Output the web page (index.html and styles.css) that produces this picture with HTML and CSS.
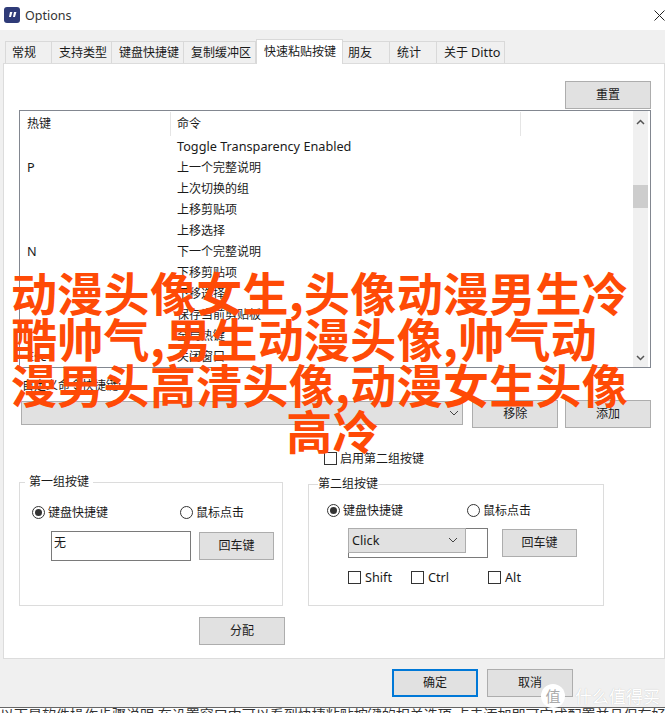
FILE: index.html
```html
<!DOCTYPE html>
<html>
<head>
  <title>Options</title>
  <link rel="stylesheet" href="styles.css">
</head>
<body>
  <div class="titlebar">
    <svg class="app-icon" width="16" height="16" viewBox="0 0 16 16">
      <rect width="16" height="16" rx="3" fill="#2f3b78"/>
      <path d="M6 5h2.400l-1.400 5h-2zM10 5h2.400l-1.400 5h-2z" fill="#fff"/>
    </svg>
    <span class="title-text">Options</span>
    <svg class="close-icon" width="11" height="11" viewBox="0 0 11 11">
      <path d="M0.500 0.500l10 10M10.500 0.500l-10 10" stroke="#222" fill="none"/>
    </svg>
  </div>

  <div class="window">
    <div class="tabs">
      <div class="tab">常规</div>
      <div class="tab">支持类型</div>
      <div class="tab">键盘快捷键</div>
      <div class="tab">复制缓冲区</div>
      <div class="tab active">快速粘贴按键</div>
      <div class="tab">朋友</div>
      <div class="tab">统计</div>
      <div class="tab">关于 <span class="en">Ditto</span></div>
    </div>

    <div class="panel">
      <div class="toolbar">
        <button class="btn">重置</button>
      </div>

      <div class="list">
        <div class="list-main">
          <div class="list-head">
            <div class="col-key">热键</div>
            <div class="col-cmd">命令</div>
          </div>
          <div class="row"><div class="col-key"></div><div class="col-cmd en">Toggle Transparency Enabled</div></div>
          <div class="row"><div class="col-key en">P</div><div class="col-cmd">上一个完整说明</div></div>
          <div class="row"><div class="col-key"></div><div class="col-cmd">上次切换的组</div></div>
          <div class="row"><div class="col-key"></div><div class="col-cmd">上移剪贴项</div></div>
          <div class="row"><div class="col-key"></div><div class="col-cmd">上移选择</div></div>
          <div class="row"><div class="col-key en">N</div><div class="col-cmd">下一个完整说明</div></div>
          <div class="row"><div class="col-key"></div><div class="col-cmd">下移剪贴项</div></div>
          <div class="row"><div class="col-key"></div><div class="col-cmd">下移选择</div></div>
          <div class="row"><div class="col-key"></div><div class="col-cmd">保存当前剪贴板</div></div>
          <div class="row"><div class="col-key"></div><div class="col-cmd">全局热键</div></div>
          <div class="row"><div class="col-key en">Esc</div><div class="col-cmd">关闭窗口</div></div>
        </div>
        <div class="scrollbar">
          <svg class="scroll-arrow" width="9" height="6" viewBox="0 0 9 6"><path d="M1 5l3.500-3.500 3.500 3.500" stroke="#555" stroke-width="1.500" fill="none"/></svg>
          <div class="scroll-thumb"></div>
          <svg class="scroll-arrow" width="9" height="6" viewBox="0 0 9 6"><path d="M1 1l3.500 3.500 3.500-3.500" stroke="#555" stroke-width="1.500" fill="none"/></svg>
        </div>
      </div>

      <div class="cmd-label">自定义命令快捷键:</div>
      <div class="cmd-row">
        <div class="select cmd-select">
          <svg width="10" height="6" viewBox="0 0 10 6"><path d="M1 1l4 4 4-4" stroke="#444" fill="none"/></svg>
        </div>
        <button class="btn">移除</button>
        <button class="btn">添加</button>
      </div>

      <div class="enable-row">
        <span class="check"></span>
        <span>启用第二组按键</span>
      </div>

      <div class="groups">
        <div class="group group-one">
          <div class="legend">第一组按键</div>
          <div class="radios">
            <span class="radio on"></span><span class="radio-label radio-label-one">键盘快捷键</span>
            <span class="radio"></span><span class="radio-label">鼠标点击</span>
          </div>
          <div class="key-row">
            <div class="key-box">无</div>
            <button class="btn btn-small">回车键</button>
          </div>
        </div>

        <div class="group group-two">
          <div class="legend legend-two">第二组按键</div>
          <div class="radios">
            <span class="radio on"></span><span class="radio-label radio-label-two">键盘快捷键</span>
            <span class="radio"></span><span class="radio-label">鼠标点击</span>
          </div>
          <div class="key-row">
            <div class="key-box">
              <div class="select mouse-select">
                <span class="en">Click</span>
                <svg width="10" height="6" viewBox="0 0 10 6"><path d="M1 1l4 4 4-4" stroke="#444" fill="none"/></svg>
              </div>
            </div>
            <button class="btn btn-small">回车键</button>
          </div>
          <div class="mods">
            <span class="mod mod-shift"><span class="check"></span><span class="en">Shift</span></span>
            <span class="mod mod-ctrl"><span class="check"></span><span class="en">Ctrl</span></span>
            <span class="mod"><span class="check"></span><span class="en">Alt</span></span>
          </div>
        </div>
      </div>

      <div class="assign-row">
        <button class="btn">分配</button>
      </div>
    </div>

    <div class="footer">
      <button class="btn btn-default">确定</button>
      <button class="btn">取消</button>
    </div>
  </div>

  <div class="next-strip">以下是软件操作步骤说明,在设置窗口中可以看到快捷粘贴按键的相关选项,点击添加即可完成配置并且保存好这些内容以便下次继续</div>

  <h1 class="headline">
    <span class="line">动漫头像女生,头像动漫男生冷</span>
    <span class="line">酷帅气,男生动漫头像,帅气动</span>
    <span class="line">漫男头高清头像,动漫女生头像</span>
    <span class="line line-last">高冷</span>
  </h1>

  <div class="watermark">
    <span class="watermark-badge">值</span>
    <span class="watermark-text">什么值得买</span>
  </div>
</body>
</html>
```

FILE: styles.css
```css
* {
  box-sizing: border-box;
}
html, body {
  margin: 0;
  height: 100%;
}
body {
  position: relative;
  display: flex;
  flex-direction: column;
  width: 665px;
  height: 713px;
  overflow: hidden;
  font-family: "Noto Sans", "Noto Sans CJK SC", sans-serif;
  font-size: 12px;
  color: #1a1a1a;
  background: white;
}
.en {
  font-size: 12.7px;
}
.titlebar {
  display: flex;
  align-items: center;
  height: 30px;
  padding: 0 0 0 4px;
  background: white;
}
.title-text {
  margin-left: 5px;
  font-size: 12.5px;
  color: #333;
}
.close-icon {
  margin-left: auto;
  margin-right: 0;
}
.window {
  display: flex;
  flex-direction: column;
  height: 677px;
  background: #f0f0f0;
}

/* tabs */
.tabs {
  display: flex;
  align-items: flex-end;
  height: 33px;
  padding-left: 5px;
}
.tab {
  display: flex;
  align-items: center;
  gap: 3px;
  min-width: 47px;
  height: 22px;
  padding: 0 4px 2px 7px;
  background: #f0f0f0;
  border: 1px solid #d9d9d9;
  border-bottom: none;
  border-left: none;
  white-space: nowrap;
}
.tab:first-child {
  border-left: 1px solid #d9d9d9;
  padding-left: 6px;
}
.tab.active {
  position: relative;
  height: 25px;
  margin-bottom: -1px;
  padding: 0 6px 3px 7px;
  background: white;
  border-left: 1px solid #d9d9d9;
}
.tab.active + .tab {
  padding-left: 5px;
}
.panel {
  height: 596px;
  margin-left: 3px;
  padding: 17px 13px 0 15px;
  background: white;
  border: 1px solid #dcdcdc;
}

/* buttons */
.btn {
  width: 86px;
  height: 28px;
  padding: 0 0 2px;
  font: inherit;
  color: #1a1a1a;
  background: #e1e1e1;
  border: 1px solid #adadad;
}
.btn-small {
  width: 75px;
}
.btn-default {
  border: 2px solid #0078d7;
}
.toolbar {
  display: flex;
  justify-content: flex-end;
}

/* hotkey list */
.list {
  display: flex;
  height: 258px;
  margin-top: 1px;
  border: 1px solid #828790;
}
.list-main {
  flex: 1;
}
.list-head, .row {
  display: flex;
  align-items: center;
}
.list-head {
  height: 25px;
}
.row {
  height: 21px;
  padding-bottom: 2px;
}
.col-key {
  width: 151px;
  padding-left: 7px;
}
.col-cmd {
  width: 350px;
  padding-left: 6px;
}
.list-head .col-key, .list-head .col-cmd {
  height: 24px;
  line-height: 24px;
  border-right: 1px solid #e5e5e5;
}
.scrollbar {
  display: flex;
  flex-direction: column;
  align-items: center;
  justify-content: space-between;
  position: relative;
  width: 15px;
  margin-right: 2px;
  padding: 8px 0 6px;
  background: #f0f0f0;
}
.scroll-thumb {
  position: absolute;
  top: 74px;
  left: 0;
  width: 15px;
  height: 23px;
  background: #cdcdcd;
}

/* command row */
.cmd-label {
  height: 16px;
  margin-top: 10px;
  padding-left: 3px;
  line-height: 16px;
}
.select {
  display: flex;
  align-items: center;
  justify-content: space-between;
  background: #e1e1e1;
  border: 1px solid #adadad;
}
.cmd-row {
  display: flex;
  align-items: flex-start;
  gap: 7px;
  margin-top: 6px;
}
.cmd-select {
  justify-content: flex-end;
  width: 443px;
  height: 24px;
  margin: 1px 2px 0 2px;
  padding-right: 3px;
}
.enable-row {
  display: flex;
  align-items: center;
  gap: 3px;
  height: 15px;
  margin-top: 23px;
  padding-left: 305px;
}
.enable-row span:last-child {
  margin-top: -2px;
}
.check {
  display: inline-block;
  width: 13px;
  height: 13px;
  background: white;
  border: 1px solid #333;
}

/* key groups */
.groups {
  display: flex;
  align-items: flex-end;
  gap: 25px;
  margin-top: 16px;
}
.group {
  position: relative;
  border: 1px solid #dcdcdc;
}
.group-one {
  width: 264px;
  height: 124px;
  padding: 23px 0 0 12px;
}
.group-two {
  width: 296px;
  height: 122px;
  padding: 19px 0 0 18px;
}
.legend {
  position: absolute;
  top: -9px;
  left: 5px;
  padding: 0 4px;
  line-height: 16px;
  background: white;
}
.legend-two {
  padding: 0;
  left: 9px;
}
.radios {
  display: flex;
  align-items: center;
  height: 13px;
}
.radio {
  position: relative;
  width: 13px;
  height: 13px;
  background: white;
  border: 1px solid #333;
  border-radius: 50%;
}
.radio.on::after {
  content: "";
  position: absolute;
  top: 2px;
  left: 2px;
  width: 7px;
  height: 7px;
  background: #333;
  border-radius: 50%;
}
.radio-label {
  margin-left: 3px;
  margin-top: -2px;
  white-space: nowrap;
}
.radio-label-one {
  width: 132px;
}
.radio-label-two {
  width: 124px;
}
.key-row {
  display: flex;
  align-items: center;
  gap: 8px;
  margin: 12px 0 0 19px;
}
.group-two .key-row {
  gap: 14px;
  margin: 11px 0 0 21px;
}
.key-box {
  width: 140px;
  height: 30px;
  padding: 1px 0 0 2px;
  background: white;
  border: 1px solid #7a7a7a;
}
.group-two .key-box {
  padding: 0;
}
.mouse-select {
  width: 118px;
  height: 25px;
  margin: -1px 0 0 -1px;
  padding: 0 7px 2px 3px;
}
.mods {
  display: flex;
  margin: 12px 0 0 21px;
}
.mod {
  display: flex;
  align-items: center;
  gap: 4px;
  height: 14px;
}
.mod-shift {
  width: 63px;
}
.mod-ctrl {
  width: 77px;
}
.assign-row {
  margin: 11px 0 0 180px;
}

/* bottom of the dialog */
.footer {
  display: flex;
  gap: 9px;
  padding: 10px 0 0 392px;
}
.next-strip {
  flex: 1;
  border-top: 1px solid #666;
  overflow: hidden;
  font-size: 14px;
  line-height: 14px;
  white-space: nowrap;
  color: #333;
  background: white;
}

/* overlays */
.headline {
  position: absolute;
  top: 268px;
  left: 11px;
  width: 643px;
  margin: 0;
  font-family: "Noto Sans CJK SC", sans-serif;
  font-size: 46px;
  font-weight: 700;
  letter-spacing: 0.3px;
  line-height: 46px;
  color: #ff4a06;
}
.line {
  display: block;
  white-space: nowrap;
}
.line-last {
  text-align: center;
}
.watermark {
  position: absolute;
  top: 683px;
  left: 541px;
  display: flex;
  align-items: center;
}
.watermark-badge {
  display: flex;
  align-items: center;
  justify-content: center;
  width: 24px;
  height: 24px;
  font-size: 15px;
  color: #aaa;
  background: white;
  border-radius: 50%;
}
.watermark-text {
  margin-left: 10px;
  font-size: 17px;
  color: #fff;
  text-shadow: 0 0 1px #bbb;
}
```
